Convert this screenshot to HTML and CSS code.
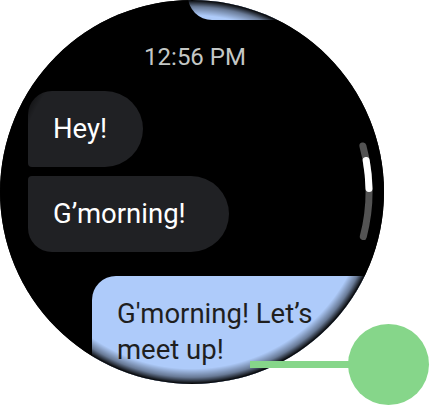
FILE: index.html
```html
<!DOCTYPE html>
<html>
<head>
<meta charset="utf-8">
<link rel="stylesheet" href="styles.css">
</head>
<body>
<div class="stage">
  <div class="watch">
    <div class="feed">
      <div class="bubble out out-prev"></div>
      <div class="time">12:56 PM</div>
      <div class="bubble in in-first">Hey!</div>
      <div class="bubble in in-last">G’morning!</div>
      <div class="bubble out out-last">G'morning! Let’s meet up!</div>
    </div>
    <div class="vignette"></div>
    <svg class="scrollbar" viewBox="0 0 384 384" width="384" height="384">
      <path class="track" d="M362.9 146 A177 177 0 0 1 363.3 236.5"/>
      <path class="thumb" d="M366.2 160.5 A177 177 0 0 1 369 188.5"/>
    </svg>
  </div>
  <div class="callout-line"></div>
  <div class="callout-dot"></div>
</div>
</body>
</html>
```
FILE: styles.css
```css
html, body {
  margin: 0;
  padding: 0;
  background: #ffffff;
}
.stage {
  position: relative;
  width: 430px;
  height: 406px;
  overflow: hidden;
  font-family: Roboto, "Liberation Sans", sans-serif;
}
.watch {
  position: relative;
  width: 384px;
  height: 384px;
  border-radius: 50%;
  overflow: hidden;
  background: #000000;
}
.feed {
  display: flex;
  flex-direction: column;
  padding: 0 22px 0 28px;
  margin-top: -56px;
}
.bubble {
  box-sizing: border-box;
  font-size: 27.5px;
  line-height: 36px;
  padding: 20px 36px 20px 25px;
}
.in {
  align-self: flex-start;
  background: #202124;
  color: #ffffff;
}
.in-first {
  border-radius: 24px 38px 38px 4px;
}
.in-last {
  margin-top: 9px;
  padding-right: 43px;
  border-radius: 4px 38px 38px 24px;
}
.out {
  align-self: flex-end;
  background: #aecbfa;
  color: #1f1f1f;
  margin-right: -38px;
  border-radius: 24px 38px 38px 24px;
}
.out-prev {
  width: 212px;
  height: 76px;
}
.out-last {
  width: 308px;
  margin-top: 24px;
  padding-right: 25px;
}
.time {
  margin: 23px 0 20px;
  text-align: center;
  font-size: 24px;
  line-height: 28px;
  color: #c4c7c5;
}
.vignette {
  position: absolute;
  inset: 0;
  pointer-events: none;
  background: radial-gradient(circle closest-side at center, rgba(0,0,0,0) 92%, rgba(0,0,0,0.4) 96.5%, rgba(0,0,0,1) 100%);
}
.scrollbar {
  position: absolute;
  left: 0;
  top: 0;
  pointer-events: none;
}
.track, .thumb {
  fill: none;
  stroke-width: 7;
  stroke-linecap: round;
}
.track { stroke: #535353; }
.thumb { stroke: #ffffff; }
.callout-line {
  position: absolute;
  left: 250px;
  top: 361px;
  width: 140px;
  height: 7px;
  background: #86d68a;
}
.callout-dot {
  position: absolute;
  left: 348px;
  top: 324px;
  width: 81px;
  height: 81px;
  border-radius: 50%;
  background: #86d68a;
}
```
